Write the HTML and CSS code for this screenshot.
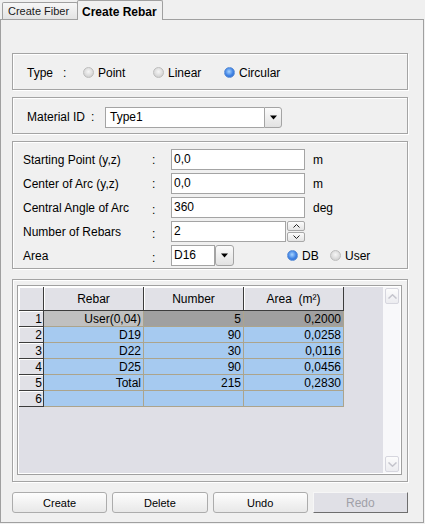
FILE: index.html
```html
<!DOCTYPE html>
<html>
<head>
<meta charset="utf-8">
<title>Create Rebar</title>
<link rel="stylesheet" href="styles.css">
</head>
<body>
<div class="tabs">
  <div class="tab">Create Fiber</div>
  <div class="tab active">Create Rebar</div>
</div>
<div class="panel">
  <div class="group type-group">
    <span class="type-lbl">Type</span><span class="type-colon">:</span>
    <span class="radio opt-point"><span class="dot"></span>Point</span>
    <span class="radio opt-linear"><span class="dot"></span>Linear</span>
    <span class="radio"><span class="dot on"></span>Circular</span>
  </div>

  <div class="group mat-group">
    <span class="mat-lbl">Material ID</span><span class="mat-colon">:</span>
    <div class="combo mat-combo">
      <span class="combo-text">Type1</span>
      <span class="drop"><svg width="7" height="5" viewBox="0 0 7 5"><path d="M0 0.5 H7 L3.5 4.5 Z" fill="#000"/></svg></span>
    </div>
  </div>

  <div class="group input-group">
    <div class="row">
      <span class="flbl">Starting Point (y,z)</span><span class="fcolon">:</span>
      <div class="field">0,0</div><span class="unit">m</span>
    </div>
    <div class="row">
      <span class="flbl">Center of Arc (y,z)</span><span class="fcolon">:</span>
      <div class="field">0,0</div><span class="unit">m</span>
    </div>
    <div class="row">
      <span class="flbl">Central Angle of Arc</span><span class="fcolon low">:</span>
      <div class="field">360</div><span class="unit">deg</span>
    </div>
    <div class="row">
      <span class="flbl">Number of Rebars</span><span class="fcolon low">:</span>
      <div class="field spin-field">2</div>
      <div class="spin">
        <span class="sb"><svg width="7" height="4" viewBox="0 0 7 4"><path d="M0.5 3.5 L3.5 0.5 L6.5 3.5" fill="none" stroke="#222" stroke-width="1"/></svg></span>
        <span class="sb"><svg width="7" height="4" viewBox="0 0 7 4"><path d="M0.5 0.5 L3.5 3.5 L6.5 0.5" fill="none" stroke="#222" stroke-width="1"/></svg></span>
      </div>
    </div>
    <div class="row">
      <span class="flbl">Area</span><span class="fcolon low">:</span>
      <div class="combo area-combo">
        <span class="combo-text">D16</span>
        <span class="drop sep"><svg width="7" height="5" viewBox="0 0 7 5"><path d="M0 0.5 H7 L3.5 4.5 Z" fill="#000"/></svg></span>
      </div>
      <span class="radio opt-db"><span class="dot on"></span>DB</span>
      <span class="radio"><span class="dot"></span>User</span>
    </div>
  </div>

  <div class="group table-group">
    <div class="grid-box">
      <div class="grid-inner">
        <div class="grid-area">
          <table class="grid">
            <colgroup><col class="w-rh"><col class="w-c"><col class="w-c"><col class="w-c"></colgroup>
            <thead>
              <tr><th></th><th>Rebar</th><th>Number</th><th>Area&nbsp;&nbsp;(m²)</th></tr>
            </thead>
            <tbody>
              <tr><td class="rh">1</td><td class="c sel1">User(0,04)</td><td class="c sel2">5</td><td class="c sel2">0,2000</td></tr>
              <tr><td class="rh">2</td><td class="c">D19</td><td class="c">90</td><td class="c">0,0258</td></tr>
              <tr><td class="rh">3</td><td class="c">D22</td><td class="c">30</td><td class="c">0,0116</td></tr>
              <tr><td class="rh">4</td><td class="c">D25</td><td class="c">90</td><td class="c">0,0456</td></tr>
              <tr><td class="rh">5</td><td class="c">Total</td><td class="c">215</td><td class="c">0,2830</td></tr>
              <tr><td class="rh">6</td><td class="c"></td><td class="c"></td><td class="c"></td></tr>
            </tbody>
          </table>
        </div>
        <div class="vscroll">
          <span class="sbtn"><svg width="9" height="5" viewBox="0 0 9 5"><path d="M0.5 4.5 L4.5 0.8 L8.5 4.5" fill="none" stroke="#c4c4cc" stroke-width="1.5"/></svg></span>
          <span class="sbtn"><svg width="9" height="5" viewBox="0 0 9 5"><path d="M0.5 0.5 L4.5 4.2 L8.5 0.5" fill="none" stroke="#c4c4cc" stroke-width="1.5"/></svg></span>
        </div>
      </div>
    </div>
  </div>

  <div class="buttons">
    <div class="btn">Create</div>
    <div class="btn">Delete</div>
    <div class="btn">Undo</div>
    <div class="btn disabled">Redo</div>
  </div>
</div>
</body>
</html>
```
FILE: styles.css
```css
* { box-sizing: border-box; }
html, body { margin: 0; padding: 0; background: #f0f0f0; }
body {
  font-family: "Liberation Sans", Arial, sans-serif;
  font-size: 12px;
  color: #000;
  width: 425px;
  height: 524px;
  overflow: hidden;
}

/* tabs */
.tabs { display: flex; align-items: flex-end; height: 19px; padding-left: 2px; }
.tab {
  height: 17px;
  width: 76px;
  border: 1px solid #a0a0a0;
  border-bottom: none;
  border-radius: 2px 2px 0 0;
  background: linear-gradient(#f7f7f7, #e3e3e3);
  font-size: 11px;
  line-height: 16px;
  padding-left: 5px;
  color: #1a1a1a;
}
.tab.active {
  position: relative;
  z-index: 1;
  height: 20px;
  width: 86px;
  margin-left: -1px;
  margin-bottom: -1px;
  background: #f0f0f0;
  font-size: 12px;
  font-weight: bold;
  line-height: 22px;
  padding-left: 4px;
  color: #000;
}

/* panel */
.panel {
  width: 424px;
  height: 504px;
  border: 1px solid #a0a0a0;
  padding: 33px 0 0 11px;
  display: flex;
  flex-direction: column;
}
.group {
  width: 396px;
  border: 1px solid #a4a4a4;
  box-shadow: inset 1px 1px 0 #fff, 1px 1px 0 #fff;
}

/* type */
.type-group { height: 37px; display: flex; align-items: center; padding: 2px 0 0 14px; }
.type-lbl { width: 36px; }
.type-colon { width: 20px; }
.radio { display: flex; align-items: center; white-space: nowrap; }
.opt-point { width: 70px; }
.opt-linear { width: 71px; }
.dot {
  width: 11px;
  height: 11px;
  border-radius: 50%;
  border: 1px solid #bdbdbd;
  background: radial-gradient(circle at 50% 40%, #f6f6f6 0, #dadada 60%, #c4c4c4 100%);
  margin-right: 4px;
  flex: none;
}
.dot.on {
  border-color: #5d8fd6;
  background: radial-gradient(circle at 45% 40%, #a8d4ff 0, #3f82e4 55%, #2a62c4 100%);
}

/* material */
.mat-group { height: 37px; margin-top: 7px; display: flex; align-items: center; padding: 3px 0 0 14px; }
.mat-lbl { width: 64px; }
.mat-colon { width: 14px; }
.combo { display: flex; height: 21px; }
.combo-text {
  flex: 1;
  background: #fff;
  border: 1px solid #a4a4a4;
  border-right: none;
  padding-left: 4px;
  line-height: 19px;
}
.drop {
  width: 18px;
  border: 1px solid #a4a4a4;
  border-radius: 0 3px 3px 0;
  background: linear-gradient(#fbfbfb, #e2e2e2);
  display: flex;
  align-items: center;
  justify-content: center;
}
.mat-combo { width: 177px; }
.mat-combo .combo-text { padding-left: 4px; }

/* inputs */
.input-group {
  height: 128px;
  margin-top: 7px;
  padding: 7px 0 0 10px;
  display: flex;
  flex-direction: column;
  gap: 3px;
}
.row { display: flex; align-items: center; height: 21px; }
.flbl { width: 129px; white-space: nowrap; }
.fcolon { width: 19px; }
.fcolon.low { padding-top: 4px; }
.field {
  width: 134px;
  height: 21px;
  background: #fff;
  border: 1px solid #a4a4a4;
  padding-left: 2px;
  line-height: 19px;
}
.unit { margin-left: 8px; }
.spin-field { width: 115px; }
.spin { display: flex; flex-direction: column; gap: 1px; margin-left: 1px; width: 18px; }
.sb {
  height: 10px;
  border: 1px solid #a8a8a8;
  border-radius: 2px;
  background: linear-gradient(#fcfcfc, #e4e4e4);
  display: flex;
  align-items: center;
  justify-content: center;
}
.area-combo { width: 63px; }
.area-combo .combo-text { border-right: 1px solid #a4a4a4; padding-left: 2px; }
.area-combo .drop.sep { width: 19px; border-radius: 3px; margin-left: 0; }
.opt-db { margin-left: 53px; width: 43px; }

/* table */
.table-group { height: 203px; margin-top: 10px; padding: 5px 5px 6px 4px; }
.grid-box {
  height: 190px;
  border: 1px solid #a0a0a0;
  padding: 1px;
  background: #fff;
}
.grid-inner { display: flex; height: 186px; background: #dfdfe6; }
.grid-area { flex: 1; }
.grid {
  border-collapse: separate;
  border-spacing: 0;
  table-layout: fixed;
  width: 325px;
  font-size: 12px;
}
.w-rh { width: 25px; }
.w-c { width: 100px; }
.grid th, .grid td {
  height: 16px;
  padding: 0 2px 0 0;
  line-height: 14px;
  white-space: nowrap;
  text-align: right;
  font-weight: normal;
}
.grid thead th {
  height: 24px;
  background: #e1e1e7;
  text-align: center;
  padding: 0;
  border-right: 1px solid #3c3c3c;
  border-bottom: 1px solid #3c3c3c;
  box-shadow: inset 1px 1px 0 #fff;
}
.grid td.rh {
  background: #e1e1e7;
  padding-right: 1px;
  border-right: 1px solid #3c3c3c;
  border-bottom: 1px solid #3c3c3c;
  box-shadow: inset 1px 1px 0 #fff;
}
.grid td.c {
  background: #a6caf0;
  border-right: 1px solid #aca48c;
  border-bottom: 1px solid #aca48c;
}
.grid td.sel1 { background: #c0c0c0; }
.grid td.sel2 { background: #a0a0a0; }

.vscroll {
  width: 17px;
  background: #f8f8fa;
  display: flex;
  flex-direction: column;
  justify-content: space-between;
  padding: 1px 1px 1px 2px;
}
.sbtn {
  height: 16px;
  border: 1px solid #d6d6de;
  border-radius: 2px;
  background: linear-gradient(#fcfcfc, #ececf0);
  display: flex;
  align-items: center;
  justify-content: center;
}

/* buttons */
.buttons {
  width: 396px;
  height: 21px;
  margin-top: 10px;
  display: grid;
  grid-template-columns: repeat(4, 1fr);
  gap: 5px;
}
.btn {
  border: 1px solid #acacac;
  border-radius: 3px;
  background: linear-gradient(#fdfdfd, #e8e8e8);
  font-size: 11px;
  display: flex;
  align-items: center;
  justify-content: center;
}
.btn.disabled {
  border-radius: 0;
  background: #e0e0e6;
  border-color: #f6f6f6 #6e6e6e #6e6e6e #f6f6f6;
  color: #a0a0a8;
  font-size: 12px;
}
```
